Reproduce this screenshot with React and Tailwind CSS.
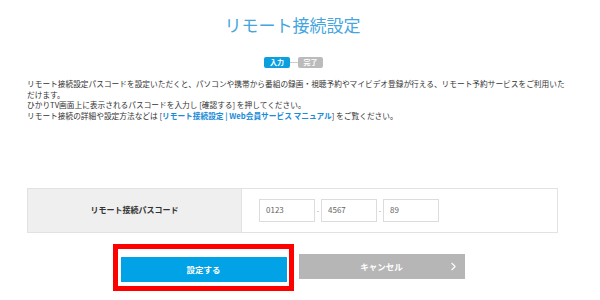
import { ChevronRight } from 'lucide-react'

const font = { fontFamily: '"Noto Sans CJK JP", "Noto Sans", sans-serif' }

function CodeInput({ value }) {
  return (
    <div className="w-[56px] h-[23px] border border-[#dcdcdc] bg-white flex items-center pl-[6px] text-[8px] text-[#666]">
      {value}
    </div>
  )
}

function Sep() {
  return <span className="w-[6px] text-center text-[7px] text-[#999]">-</span>
}

export default function App() {
  return (
    <div className="w-[600px] h-[300px] bg-white overflow-hidden" style={font}>
      <div className="w-[531px] ml-[27px]">
        {/* Title */}
        <h1 className="pt-[14px] text-center text-[17px] leading-[22px] text-[#45a5de] font-normal">
          リモート接続設定
        </h1>

        {/* Steps */}
        <div className="mt-[21px] flex items-center justify-center pl-[2px]">
          <span className="h-[11px] w-[26px] rounded-[2px] bg-[#0b9fe0] text-white text-[7px] font-bold leading-[11px] text-center">入力</span>
          <span className="w-[8px] h-px bg-[#cccccc]" />
          <span className="h-[11px] w-[25px] rounded-[2px] bg-[#bbbbbb] text-white text-[7px] font-bold leading-[11px] text-center">完了</span>
        </div>

        {/* Description */}
        <div className="mt-[11px] w-[540px] text-[7.7px] leading-[10.7px] text-[#333]">
          <p>リモート接続設定パスコードを設定いただくと、パソコンや携帯から番組の録画・視聴予約やマイビデオ登録が行える、リモート予約サービスをご利用いただけます。</p>
          <p>ひかりTV画面上に表示されるパスコードを入力し [確認する] を押してください。</p>
          <p>
            リモート接続の詳細や設定方法などは [<span className="text-[#1a8bd8] font-bold">リモート接続設定 | Web会員サービス マニュアル</span>] をご覧ください。
          </p>
        </div>

        {/* Form table */}
        <div className="mt-[66px] h-[45px] border border-[#e2e2e2] flex">
          <div className="w-[214px] bg-[#efefef] border-r border-[#e2e2e2] flex items-center justify-center text-[8px] font-bold text-[#333]">
            リモート接続パスコード
          </div>
          <div className="flex-1 flex items-center pl-[17px]">
            <CodeInput value="0123" />
            <Sep />
            <CodeInput value="4567" />
            <Sep />
            <CodeInput value="89" />
          </div>
        </div>

        {/* Buttons */}
        <div className="mt-[21px] flex justify-center gap-[12px]">
          <div className="relative">
            <button className="w-[166px] h-[25px] bg-[#02a2e6] text-white text-[8.5px] font-bold">
              設定する
            </button>
            <div className="absolute -left-[8px] -right-[7px] -top-[10px] -bottom-[9px] border-[5px] border-[#ff0000]" />
          </div>
          <button className="relative w-[166px] h-[25px] bg-[#b6b6b6] text-white text-[8.5px] font-bold">
            キャンセル
            <ChevronRight className="absolute right-[5px] top-[6px]" size={13} strokeWidth={2} />
          </button>
        </div>
      </div>
    </div>
  )
}
